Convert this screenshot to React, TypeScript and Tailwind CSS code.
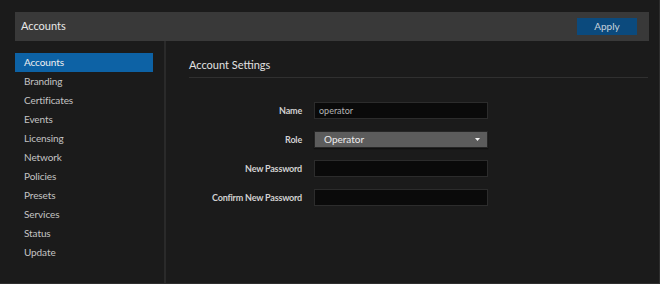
import { useState } from "react";

const sections = [
  "Accounts",
  "Branding",
  "Certificates",
  "Events",
  "Licensing",
  "Network",
  "Policies",
  "Presets",
  "Services",
  "Status",
  "Update",
];

const font = { fontFamily: "Lato, 'Liberation Sans', sans-serif" };

export default function App() {
  const [active, setActive] = useState("Accounts");
  const [form, setForm] = useState({ name: "operator", role: "Operator", password: "", confirm: "" });

  const handleChange = (e: any) => {
    const { name, value } = e.target;
    setForm(prev => ({ ...prev, [name]: value }));
  };

  return (
    <div
      className="w-[660px] h-[284px] bg-[#1b1b1b] border-r border-b border-[#2e2e2e] flex flex-col overflow-hidden"
      style={font}
    >
      <div className="mt-[12px] ml-[15px] mr-[10px] h-[29px] shrink-0 bg-[#393939] flex items-center justify-between pl-[6px] pr-[12px]">
        <span className="text-[11px] text-[#e8e8e8]">{active}</span>
        <button className="w-[60px] h-[17px] bg-[#0b4a7d] text-[10px] text-[#c6d2dc]">Apply</button>
      </div>

      <div className="flex flex-1 min-h-0">
        <div className="w-[166px] shrink-0 border-r-2 border-[#2a2a2a] pt-[12px] pl-[15px] pr-[11px]">
          {sections.map(s => (
            <div
              key={s}
              onClick={() => setActive(s)}
              className={
                "h-[19px] flex items-center pl-[9px] text-[10px] tracking-[-0.1px] cursor-pointer " +
                (s === active ? "bg-[#0d62a5] text-[#f0f0f0]" : "text-[#c4c4c4]")
              }
            >
              {s}
            </div>
          ))}
        </div>

        <div className="flex-1 pl-[23px] pr-[11px] pt-[16px]">
          <div className="h-[21px] border-b border-[#303030] text-[11px] leading-[16px] text-[#e2e2e2]">
            Account Settings
          </div>

          <div className="mt-[24px] grid grid-cols-[113px_174px] gap-x-[12px] gap-y-[12px] items-center">
            <label className="text-right text-[9px] font-bold tracking-[-0.2px] text-[#d2d2d2]">Name</label>
            <input
              name="name"
              value={form.name}
              onChange={handleChange}
              className="h-[17px] bg-[#0a0a0a] border border-[#2c2c2c] px-[4px] text-[9px] text-[#b4b4b4] outline-none"
            />

            <label className="text-right text-[9px] font-bold tracking-[-0.2px] text-[#d2d2d2]">Role</label>
            <div className="h-[17px] bg-[#5c5c5c] border border-[#262626] shadow-[0_1px_1px_#111] flex items-center justify-between pl-[9px] pr-[7px]">
              <span className="text-[10px] text-[#ececec]">{form.role}</span>
              <svg width="5" height="3" viewBox="0 0 5 3">
                <path d="M0 0 L5 0 L2.5 3 Z" fill="#f4f4f4" />
              </svg>
            </div>

            <label className="text-right text-[9px] font-bold tracking-[-0.2px] text-[#d2d2d2]">New Password</label>
            <input
              name="password"
              type="password"
              value={form.password}
              onChange={handleChange}
              className="h-[17px] bg-[#0a0a0a] border border-[#2c2c2c] px-[4px] text-[9px] text-[#b4b4b4] outline-none"
            />

            <label className="text-right text-[9px] font-bold tracking-[-0.2px] text-[#d2d2d2]">Confirm New Password</label>
            <input
              name="confirm"
              type="password"
              value={form.confirm}
              onChange={handleChange}
              className="h-[17px] bg-[#0a0a0a] border border-[#2c2c2c] px-[4px] text-[9px] text-[#b4b4b4] outline-none"
            />
          </div>
        </div>
      </div>
    </div>
  );
}
